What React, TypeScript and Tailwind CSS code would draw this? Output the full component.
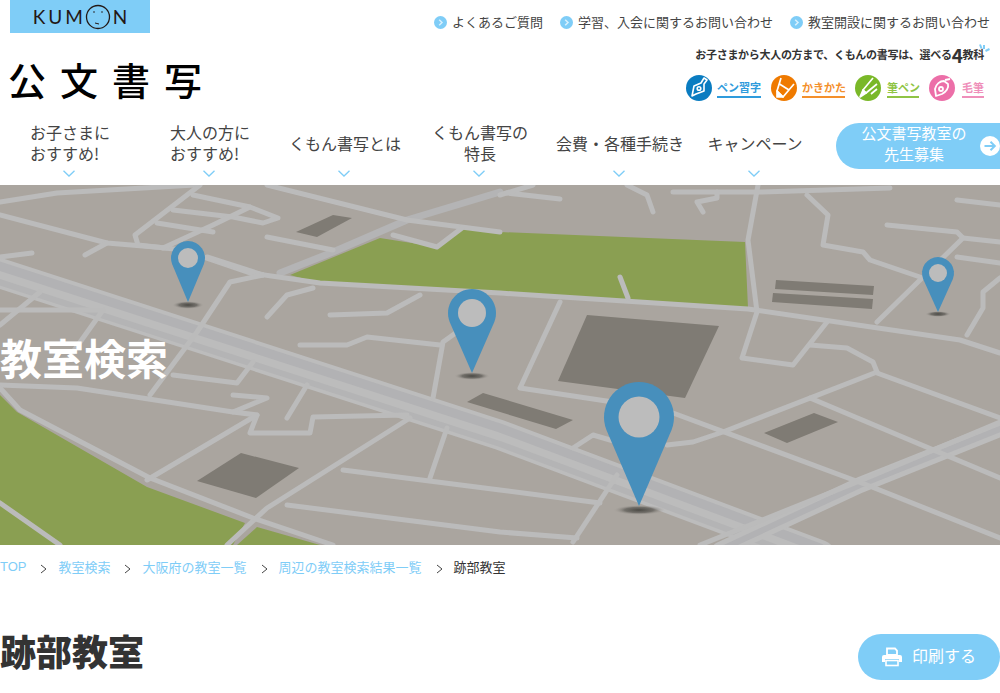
import React from "react";

const JP = { fontFamily: '"Noto Sans CJK JP", "Noto Sans", sans-serif' };

function Dot() {
  return (
    <svg width="13" height="13" viewBox="0 0 13 13" className="shrink-0">
      <circle cx="6.5" cy="6.5" r="6.5" fill="#7fcdf7" />
      <path d="M5.2 3.8 L8 6.5 L5.2 9.2" fill="none" stroke="#d8f0fd" strokeWidth="1.5" />
    </svg>
  );
}

function Chev() {
  return (
    <svg width="12" height="7" viewBox="0 0 12 7" className="block">
      <path d="M0.5 0.8 L6 6 L11.5 0.8" fill="none" stroke="#7fcdf7" strokeWidth="1.3" />
    </svg>
  );
}

function Sep() {
  return (
    <svg width="7" height="10" viewBox="0 0 7 10" className="shrink-0 mt-[3px]">
      <path d="M1 1 L6 5 L1 9" fill="none" stroke="#444" strokeWidth="1" />
    </svg>
  );
}

const SUBJECTS = [
  {
    label: "ペン習字", color: "#0a7cc1", line: "#2f9bdc", w: "w-[44px]", gap: "gap-[5px]",
    icon: <g fill="none" stroke="#fff" strokeWidth="1.6" strokeLinejoin="round"><path d="M6 21 L8 11 L15 8 L18 3 L21 5 L18 9 L18 16 L10 19 Z" /><circle cx="13" cy="13.5" r="1.8" /></g>,
  },
  {
    label: "かきかた", color: "#ef7a00", line: "#f4902c", w: "w-[43px]", gap: "gap-[5px]",
    icon: <g fill="none" stroke="#fff" strokeWidth="1.7" strokeLinejoin="round"><path d="M10 3 L6 16 L12 22 L23 9" /><path d="M8.5 9 L18 15" /><path d="M6 16 L12 22 L6 22 Z" fill="#fff" /></g>,
  },
  {
    label: "筆ペン", color: "#7ab828", line: "#8fc445", w: "w-[32px]", gap: "gap-[6px]",
    icon: <g fill="none" stroke="#fff" strokeWidth="1.7" strokeLinejoin="round"><path d="M18 3 L8 15 L11 18 L22 9" /><path d="M8 15 L5 22 L11 18 Z" fill="#fff" /><path d="M16 19 L22 14" /></g>,
  },
  {
    label: "毛筆", color: "#ec6fa8", line: "#ef8fba", w: "w-[22px]", gap: "gap-[7px]",
    icon: <g fill="none" stroke="#fff" strokeWidth="1.8" strokeLinejoin="round"><path d="M7 21 L6 14 C7 9 11 6 15 6 L19 9 C20 13 17 17 13 19 Z" /><circle cx="12" cy="14" r="2" /><path d="M16 5 L21 4" /></g>,
  },
];

const NAV = [
  { lines: ["お子さまに", "おすすめ!"], w: "w-[140px]", left: true },
  { lines: ["大人の方に", "おすすめ!"], w: "w-[140px]", left: true },
  { lines: ["くもん書写とは"], w: "w-[130px]" },
  { lines: ["くもん書写の", "特長"], w: "w-[140px]" },
  { lines: ["会費・各種手続き"], w: "w-[140px]" },
  { lines: ["キャンペーン"], w: "w-[130px]" },
];

const ROADS = [
  "M0 17 L57 8 L195 0", "M267 0 L407 35 L500 47", "M200 0 L135 50 L138 60 L183 65 L250 88 L320 98 L500 108 L748 124 L960 155 L1000 168",
  "M0 30 L107 58 L167 63", "M107 58 L85 70", "M0 72 L32 68", "M193 10 L250 22 L278 33 L263 38 L233 32 L173 25",
  "M250 22 L213 40 L163 63", "M157 38 L213 47", "M267 52 L333 65", "M393 50 L437 62 L462 43", "M207 72 L263 90",
  "M263 90 L230 97 L197 147 L150 210", "M267 132 L287 110 L313 103", "M330 130 L387 128 L420 110", "M300 160 L347 160 L367 152 L440 160",
  "M457 147 L443 157 L433 213", "M40 107 L0 140", "M0 125 L103 125 L73 167", "M173 190 L237 198 L253 177",
  "M0 200 L77 203 L233 227 L267 213 L233 210", "M307 200 L287 233", "M233 227 L257 230 L250 248 L310 248 L313 232 L407 230",
  "M257 230 L147 295", "M410 233 L267 323 L227 360", "M447 243 L430 293", "M343 285 L500 305 L600 318", "M287 320 L500 347 L577 353",
  "M758 0 L748 55 L757 127 L742 173 L793 180 L827 137", "M560 117 L520 203 L613 217", "M673 7 L760 7 L890 3", "M627 0 L647 10 L653 27",
  "M717 7 L717 13 L697 17 L703 27", "M620 92 L628 113", "M807 10 L828 30 L823 60 L863 67 L870 75 L920 92",
  "M887 40 L957 47 L963 53 L877 137", "M963 53 L1000 57", "M957 72 L1000 78", "M957 15 L1000 20", "M1000 93 L983 107 L983 123 L967 150",
  "M810 160 L847 163 L873 177 L877 187", "M877 187 L723 247 L693 257 L667 260", "M810 213 L1000 293", "M877 188 L1000 233",
  "M673 228 L867 300 L1000 353", "M1000 237 L867 293 L700 360", "M573 263 L593 250 L617 257", "M617 290 L573 357", "M507 8 L560 14", "M533 0 L500 10",
  "M0 318 L60 360", "M0 203 L20 225 L150 293 L253 333 L333 360",
];

function Pin({ x, y, r, tip, hole, sx, sy }: { x: number; y: number; r: number; tip: number; hole: number; sx: number; sy: number }) {
  const dx = r * 0.93;
  const dy = r * 0.37;
  return (
    <g>
      <ellipse cx={x} cy={tip + sy} rx={sx} ry={sy + 1} fill="url(#pinShadow)" />
      <path d={`M${x} ${tip} L${x - dx} ${y + dy} A${r} ${r} 0 1 1 ${x + dx} ${y + dy} Z`} fill="#478fbc" />
      <circle cx={x} cy={y} r={hole} fill="#bcbcbc" />
    </g>
  );
}

function MapArt() {
  return (
    <svg viewBox="0 0 1000 360" width="1000" height="360" className="block">
      <defs>
        <radialGradient id="pinShadow">
          <stop offset="0%" stopColor="#45443f" stopOpacity="0.95" />
          <stop offset="55%" stopColor="#55534e" stopOpacity="0.65" />
          <stop offset="100%" stopColor="#aaa59f" stopOpacity="0" />
        </radialGradient>
      </defs>
      <rect width="1000" height="360" fill="#aaa59f" />
      <g fill="#8a9f52">
        <polygon points="290,90 380,53 437,62 462,43 500,47 745,57 748,123 633,115 500,110 320,98" />
        <polygon points="0,210 17,227 147,302 245,338 233,360 0,360" />
        <polygon points="257,342 320,360 237,360" />
      </g>
      <g fill="#7f7b74">
        <polygon points="296,47 333,30 352,33 317,52" />
        <polygon points="197,296 241,268 299,283 256,313" />
        <polygon points="587,130 719,141 685,213 558,196" />
        <polygon points="467,217 483,208 573,235 556,244" />
        <polygon points="776,95 874,101 873,110 775,104" />
        <polygon points="773,108 873,114 872,124 772,117" />
        <polygon points="764,248 814,228 838,237 787,258" />
      </g>
      <g fill="none" strokeLinejoin="round" strokeLinecap="round">
        <path d="M-10 85 L500 250 L820 370" stroke="#bcbcbc" strokeWidth="30" />
        <path d="M-10 78 L500 243 L820 363" stroke="#b2b2b4" strokeWidth="9" />
        <path d="M-10 94 L500 259 L820 379" stroke="#b4b4b5" strokeWidth="6" />
        <path d="M1010 240 L860 300 L720 365" stroke="#bcbcbc" strokeWidth="16" />
        <path d="M1010 240 L860 300 L720 365" stroke="#b2b2b4" strokeWidth="6" />
        <path d="M500 7 L407 35 L333 67 L280 88" stroke="#b4b4b5" strokeWidth="7" />
        <g stroke="#bbbbbb" strokeWidth="5">
          {ROADS.map((d) => <path key={d} d={d} />)}
        </g>
      </g>
      <Pin x={188} y={73} r={17} tip={117} hole={10} sx={16} sy={3} />
      <Pin x={472} y={128} r={24} tip={188} hole={14} sx={18} sy={3} />
      <Pin x={639} y={232} r={35} tip={321} hole={20.5} sx={26} sy={4} />
      <Pin x={938} y={88} r={16} tip={127} hole={9} sx={13} sy={2} />
    </svg>
  );
}

export default function App() {
  return (
    <div className="w-[1000px] h-[693px] overflow-hidden bg-white text-[#333]" style={JP}>
      <header className="flex h-[123px] justify-between">
        <div className="pl-[10px]">
          <div className="flex h-[33px] w-[140px] items-center justify-center bg-[#7fcdf7] text-[#231815]">
            <span className="text-[19px] leading-none tracking-[3px]" style={{ fontFamily: "Lato, sans-serif" }}>KUM</span>
            <svg width="26" height="26" viewBox="0 0 26 26" className="mx-[-1px]">
              <circle cx="13" cy="13" r="11.5" fill="none" stroke="#231815" strokeWidth="1.3" />
              <circle cx="9" cy="8" r="0.8" fill="#231815" />
              <circle cx="17" cy="8" r="0.8" fill="#231815" />
              <path d="M10 19 L14 20" stroke="#231815" strokeWidth="1" />
            </svg>
            <span className="ml-[3px] text-[19px] leading-none" style={{ fontFamily: "Lato, sans-serif" }}>N</span>
          </div>
          <div className="mt-[21px] -ml-[2px] text-[38px] font-medium leading-[50px] tracking-[14px] text-black whitespace-nowrap">公文書写</div>
        </div>
        <div className="flex flex-col items-end pr-[10px]">
          <div className="flex h-[44px] items-center gap-[17px] text-[13px] text-[#444]">
            {["よくあるご質問", "学習、入会に関するお問い合わせ", "教室開設に関するお問い合わせ"].map((t) => (
              <span key={t} className="flex items-center gap-[5px] whitespace-nowrap">
                <Dot />
                {t}
              </span>
            ))}
          </div>
          <div className="relative flex h-[21px] items-center whitespace-nowrap pr-[6px] text-[11px] font-bold tracking-[-0.3px] text-[#333]">
            お子さまから大人の方まで、くもんの書写は、選べる<span className="text-[19px] leading-none mx-[0px]">4</span>教科
            <svg width="11" height="10" viewBox="0 0 11 10" className="absolute right-0 top-[0px]">
              <path d="M1 0.5 L2.5 4.5 M5 1 L5 5 M10.5 5 L6.5 7" stroke="#7fcdf7" strokeWidth="2" />
            </svg>
          </div>
          <div className="mt-[10px] flex items-center gap-[10px] pr-[6px]">
            {SUBJECTS.map((s) => (
              <div key={s.label} className={`flex items-center ${s.gap}`}>
                <svg width="26" height="26" viewBox="0 0 26 26" className="shrink-0">
                  <circle cx="13" cy="13" r="13" fill={s.color} />
                  {s.icon}
                </svg>
                <div className={`${s.w} border-b-2 pb-[1px] text-center text-[11px] font-bold leading-[16px] whitespace-nowrap`} style={{ color: s.line, borderColor: s.line }}>
                  {s.label}
                </div>
              </div>
            ))}
          </div>
        </div>
      </header>

      <nav className="flex h-[62px] items-start">
        {NAV.map((n) => (
          <div key={n.lines[0]} className={`${n.w} flex h-[62px] shrink-0 flex-col items-center`}>
            <div className="flex h-[46px] items-center pb-[6px]">
              <div className={`${n.left ? "text-left" : "text-center"} whitespace-nowrap text-[16px] leading-[21px] text-[#444]`}>
                {n.lines.map((l, i) => (
                  <React.Fragment key={l}>
                    {i > 0 && <br />}
                    {l}
                  </React.Fragment>
                ))}
              </div>
            </div>
            <div className="mt-[1px] mr-[3px]"><Chev /></div>
          </div>
        ))}
        <div className="ml-[16px] flex h-[46px] w-[180px] shrink-0 items-center rounded-l-[23px] bg-[#7fcdf7] text-white">
          <div className="w-[156px] pb-[6px] text-center text-[15px] leading-[21px]">
            公文書写教室の<br />先生募集
          </div>
          <svg width="20" height="20" viewBox="0 0 20 20" className="shrink-0 ml-[-12px]">
            <circle cx="10" cy="10" r="10" fill="#fff" />
            <path d="M4.5 10 H14.5 M10.5 5.8 L14.8 10 L10.5 14.2" fill="none" stroke="#7fcdf7" strokeWidth="2" />
          </svg>
        </div>
      </nav>

      <section className="relative h-[360px]">
        <MapArt />
        <h2 className="absolute left-0 top-[142px] text-[42px] font-bold leading-[60px] text-white whitespace-nowrap">教室検索</h2>
      </section>

      <div className="flex h-[44px] items-center text-[13px] text-[#7fcdf7] whitespace-nowrap">
        <span className="font-['Liberation_Sans']">TOP</span>
        <span className="ml-[13px] mr-[12px] flex"><Sep /></span>
        <span>教室検索</span>
        <span className="ml-[13px] mr-[12px] flex"><Sep /></span>
        <span>大阪府の教室一覧</span>
        <span className="ml-[14px] mr-[11px] flex"><Sep /></span>
        <span>周辺の教室検索結果一覧</span>
        <span className="ml-[14px] mr-[11px] flex"><Sep /></span>
        <span className="text-[#333]">跡部教室</span>
      </div>

      <div className="mt-[45px] flex h-[46px] items-start justify-between">
        <h1 className="text-[36px] font-black leading-[32px] text-[#333] whitespace-nowrap">跡部教室</h1>
        <div className="flex h-[46px] w-[142px] items-center gap-[10px] rounded-full bg-[#7fcdf7] pl-[24px] text-[16px] text-white">
          <svg width="20" height="20" viewBox="0 0 20 20" className="shrink-0">
            <path d="M5 1.5 H13 L15 3.5 V8 H5 Z" fill="none" stroke="#fff" strokeWidth="1.8" />
            <path d="M2 8 H18 A2 2 0 0 1 20 10 V15 H17 V12 H3 V15 H0 V10 A2 2 0 0 1 2 8 Z" fill="#fff" />
            <rect x="4" y="13.5" width="12" height="5" fill="none" stroke="#fff" strokeWidth="1.6" />
          </svg>
          <span className="whitespace-nowrap pb-[5px]">印刷する</span>
        </div>
      </div>
    </div>
  );
}
